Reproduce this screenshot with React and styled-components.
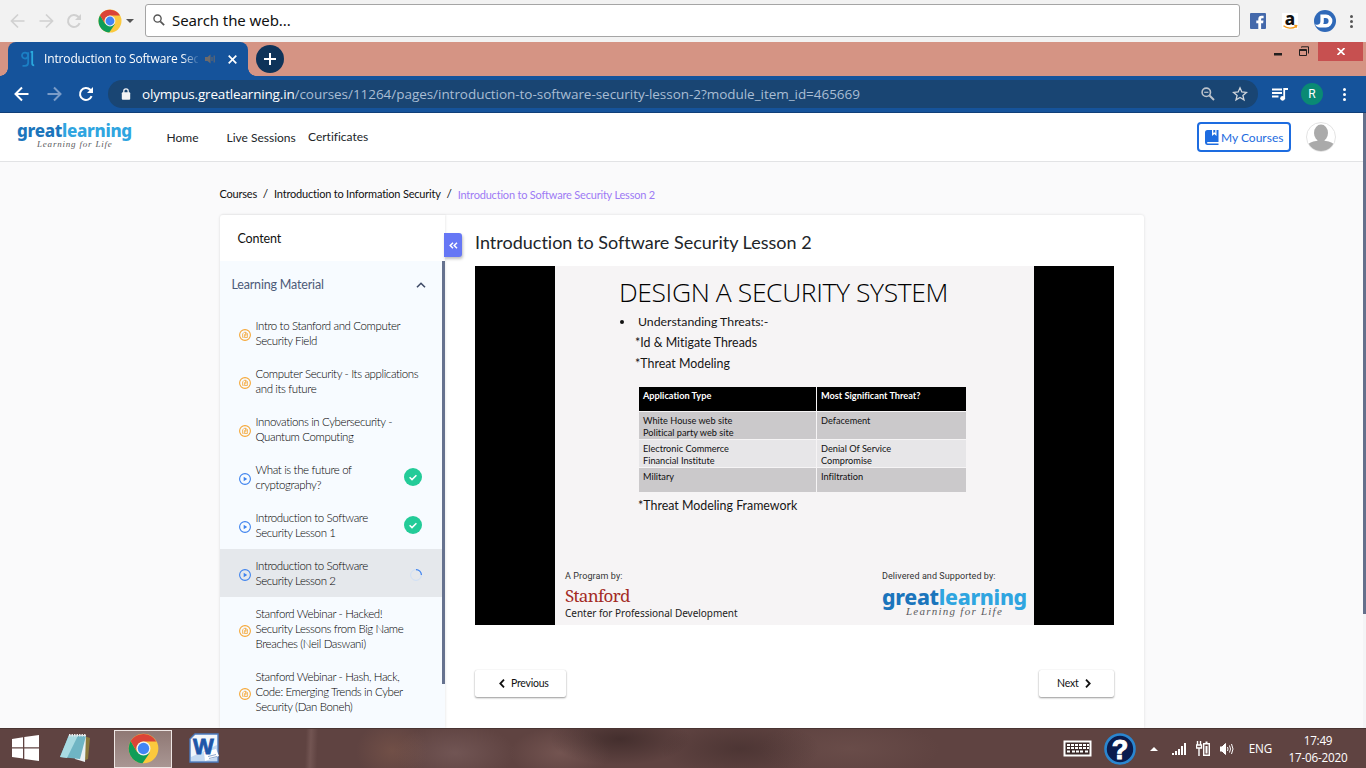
import React from "react";
import styled, { createGlobalStyle } from "styled-components";

const GlobalStyle = createGlobalStyle`
  * { box-sizing: border-box; }
  html, body { margin: 0; padding: 0; background: #fafbfc; }
  svg { display: block; flex: none; }
`;

const lato = `Lato, "Liberation Sans", sans-serif`;
const noto = `"Noto Sans", "Open Sans", sans-serif`;
const segoe = `"Open Sans", "Noto Sans", sans-serif`;

const Screen = styled.div`
  width: 1366px; height: 768px; display: flex; flex-direction: column;
  overflow: hidden; font-family: ${lato}; color: #212529; white-space: nowrap;
  font-variant-ligatures: none;
`;

/* Every run of text keeps a fixed advance through size and tracking. */
const Text = styled.span`
  display: block;
  white-space: pre;
  font-family: ${(p) => p.$font || lato};
  font-size: ${(p) => p.$size || 12}px;
  font-weight: ${(p) => p.$weight || 400};
  letter-spacing: ${(p) => p.$track || 0}px;
  line-height: ${(p) => p.$line || 16}px;
  color: ${(p) => p.$color || "inherit"};
`;

/* ---------- top search strip ---------- */
const SearchStrip = styled.div`
  height: 42px; flex: none; background: #f2f2f2; display: flex; align-items: center;
  padding: 0 9px 0 10px;
`;
const SearchNav = styled.div`
  display: flex; align-items: center; gap: 12px; width: 88px; color: #d2d2d2;
`;
const BrowserPick = styled.div`
  display: flex; align-items: center; gap: 4px; width: 47px;
`;
const Caret = styled.i`
  border: 4px solid transparent; border-top-color: #555; border-bottom: 0;
`;
const SearchBox = styled.div`
  width: 1095px; height: 33px; background: #fff; border: 1px solid #a5a5a5; border-radius: 3px;
  display: flex; align-items: center; gap: 7px; padding: 0 0 2px 7px; margin-top: -1px;
`;
const QuickLinks = styled.div`
  display: flex; align-items: center; margin-left: 10px;
`;
const AmazonTile = styled.div`margin-left: 16px;`;
const DTile = styled.div`margin-left: 16px;`;
const Dots = styled.div`
  display: flex; flex-direction: column; gap: ${(p) => p.$gap}px; margin-left: ${(p) => p.$left}px;
  i { width: 3px; height: 3px; border-radius: 50%; background: ${(p) => p.$color}; }
`;

/* ---------- browser tabs ---------- */
const TabStrip = styled.div`
  height: 34px; flex: none; background: #d59484; display: flex; align-items: flex-start;
`;
const TabCorner = styled.div`
  width: 8px; height: 34px;
  background: linear-gradient(#d59484, #d59484) 0 0 / 8px 26px no-repeat,
    radial-gradient(circle at ${(p) => (p.$right ? 8 : 0)}px 0, #d59484 7.5px, #15539b 8px) 0 26px / 8px 8px no-repeat;
`;
const Tab = styled.div`
  width: 240px; height: 34px; background: #15539b; border-radius: 8px 8px 0 0; color: #fff;
  display: flex; align-items: center; padding-left: 13px;
`;
const TabTitle = styled.div`
  width: 154px; margin-left: 9px; overflow: hidden;
  mask-image: linear-gradient(90deg, #000 138px, transparent 156px);
`;
const TabSound = styled.div`margin-left: 7px;`;
const TabClose = styled.div`margin-left: 13px;`;
const NewTab = styled.div`
  width: 28px; height: 28px; border-radius: 50%; background: #0e3359; margin: 3px 0 0;
  display: flex; align-items: center; justify-content: center;
`;
const WindowButtons = styled.div`
  margin-left: auto; display: flex; align-items: flex-start; padding-right: 3px;
`;
const CloseWindow = styled.div`
  width: 45px; height: 19px; background: #c75050; display: flex; align-items: center; justify-content: center;
  margin-left: 9px;
`;

/* ---------- address bar ---------- */
const AddressRow = styled.div`
  height: 37px; flex: none; background: #15539b; border-bottom: 1px solid #103f78; display: flex; align-items: center;
  padding-left: 14px; color: #fff;
`;
const NavIcons = styled.div`display: flex; align-items: center; gap: 16px; width: 94px;`;
const UrlPill = styled.div`
  width: 1150px; height: 28px; border-radius: 14px; background: #194573; display: flex; align-items: center;
  padding: 0 10px 0 13px;
`;
const Url = styled.div`
  display: flex; margin-left: 11px; flex: 1;
`;
const StarSlot = styled.div`margin-left: 17px;`;
const MediaSlot = styled.div`margin-left: 14px;`;
const Avatar = styled.div`
  width: 22px; height: 22px; border-radius: 50%; background: #0a8a74; display: flex; align-items: center;
  justify-content: center; margin-left: 13px;
`;

/* ---------- site ---------- */
const Site = styled.div`
  height: 615px; flex: none; display: flex; background: #fafafb;
`;
const SiteBody = styled.div`width: 1363px; flex: none;`;
const PageTrack = styled.div`
  width: 3px; background: #f4f4f6;
  &::before { content: ""; display: block; height: 501px; background: #64708c; }
`;
const Header = styled.header`
  height: 49px; background: #fff; border-bottom: 1px solid #e2e3e5; display: flex;
  align-items: center; padding: 0 27px 0 17px;
`;
const Brand = styled.div`width: 149.5px; margin-top: -5px;`;
const BrandWord = styled.div`display: flex; height: ${(p) => p.$h}px; align-items: center;`;
const BrandTag = styled.div`padding-left: ${(p) => p.$left}px;`;
const MenuItem = styled.a`width: ${(p) => p.$w}px; padding-top: ${(p) => p.$drop || 0}px;`;
const CoursesButton = styled.div`
  width: 94px; height: 30px; border: 2px solid #1d6ce0; border-radius: 4px; display: flex; align-items: center;
  gap: 2px; padding: 1px 0 0 6px; margin-left: auto;
`;
const UserPic = styled.div`margin-left: 15px;`;

const Crumbs = styled.nav`
  height: 53px; padding: 10px 0 0 219.5px; display: flex; align-items: center; color: #111;
`;
const CrumbSlash = styled.span`
  width: 17px; text-align: center; font: 12px/16px ${lato};
`;
const CurrentCrumb = styled.div`padding-top: 2px;`;
const Card = styled.div`
  width: 924px; height: 513px; margin-left: 220px; background: #fff; display: flex; border-radius: 3px 3px 0 0;
  box-shadow: 0 0 3px rgba(0, 0, 0, 0.12);
`;
const Sidebar = styled.aside`
  width: 225px; flex: none; display: flex; flex-direction: column;
  box-shadow: 1px 0 2px rgba(0, 0, 0, 0.07);
`;
const SidebarHead = styled.div`height: 46px; display: flex; align-items: center; padding: 1px 0 0 17.5px;`;
const SidebarScroll = styled.div`display: flex; height: 467px; overflow: hidden; background: #f7fbff;`;
const Lessons = styled.div`width: 222px;`;
const Thumb = styled.div`width: 3px; height: 423px; background: #66728f;`;
const Group = styled.div`
  height: 48px; display: flex; align-items: center; justify-content: space-between; padding: 0 16px 1px 11.5px;
`;
const Lesson = styled.div`
  display: flex; align-items: center; padding: 9px 20px 9px 19px;
  background: ${(p) => (p.$active ? "#e5e8ec" : "transparent")};
`;
const LessonIcon = styled.div`width: 16.5px; flex: none; padding-top: 4px;`;
const LessonText = styled.div`flex: 1; min-width: 0;`;
const DoneDot = styled.div`
  width: 18px; height: 18px; border-radius: 50%; background: #23cb98; display: flex; align-items: center;
  justify-content: center; flex: none;
`;
const Spinner = styled.div`padding-top: 4px;`;

const Main = styled.main`flex: 1; position: relative; padding: 16px 30px 0;`;
const Collapse = styled.div`
  position: absolute; left: -1px; top: 18px; width: 18px; height: 24px; background: #6677f5;
  border-radius: 0 3px 3px 0; box-shadow: 1px 2px 3px rgba(0, 0, 0, 0.25);
  display: flex; align-items: center; justify-content: center;
`;
const Player = styled.div`
  width: 639px; height: 359px; background: #000; margin-top: 13px; padding: 0 80px;
`;
const Slide = styled.div`
  width: 479px; height: 359px; background: #f6f4f5; color: #161616; padding: 9px 7px 0 9px;
`;
const SlideTitle = styled.div`height: 36px; padding: 0 0 2px 55px; display: flex; align-items: center;`;
const SlideLine = styled.div`
  height: 21px; padding-left: ${(p) => p.$indent}px; display: flex; align-items: center;
`;
const Bullet = styled.i`
  width: 4px; height: 4px; border-radius: 50%; background: #111; margin-right: 14px;
`;
const ThreatTable = styled.div`
  width: 327px; margin: 13px 0 3px 75px; display: grid; grid-template-columns: 177px 149px; column-gap: 1px;
  grid-template-rows: 24px 27px 27px 24px; row-gap: 1px;
`;
const Cell = styled.div`
  background: ${(p) => (p.$tone === "head" ? "#000" : p.$tone === "dark" ? "#cbc9cb" : "#e7e6e8")};
  padding: 3px 0 0 4px;
`;
const Credits = styled.div`display: flex; justify-content: space-between; margin-top: 54px; padding-left: 1px;`;
const Credit = styled.div`width: ${(p) => p.$w}px;`;

const Pager = styled.div`display: flex; justify-content: space-between; margin-top: 45px;`;
const PagerButton = styled.div`
  width: ${(p) => p.$w}px; height: 27px; background: #fff; border-radius: 2px;
  box-shadow: 0 1px 2px rgba(0, 0, 0, 0.4), 0 0 1px rgba(0, 0, 0, 0.15);
  display: flex; align-items: center; gap: 6px; padding: 0 0 1px ${(p) => p.$pad || 0}px;
`;

/* ---------- taskbar ---------- */
const Taskbar = styled.div`
  height: 40px; flex: none; display: flex; align-items: center; padding: 0 18px 0 11px; color: #fff;
  border-top: 1px solid #493432;
  background:
    linear-gradient(92deg, transparent 306px, rgba(150,118,114,.35) 311px, transparent 318px),
    radial-gradient(ellipse 36px 30px at 392px 22px, rgba(140,98,80,.4), transparent),
    radial-gradient(ellipse 60px 30px at 455px 24px, rgba(140,112,112,.4), transparent),
    radial-gradient(ellipse 70px 26px at 620px 10px, rgba(35,22,22,.45), transparent),
    radial-gradient(ellipse 50px 26px at 560px 24px, rgba(140,105,100,.45), transparent),
    radial-gradient(ellipse 80px 30px at 740px 20px, rgba(35,22,22,.3), transparent),
    radial-gradient(ellipse 90px 30px at 850px 20px, rgba(120,90,85,.4), transparent),
    #5f4341;
`;
const TaskSlot = styled.div`
  width: ${(p) => p.$w}px; display: flex; align-items: center; justify-content: center; margin-top: -2px;
`;
const ActiveTask = styled.div`
  width: 58px; height: 38px; border: 1px solid #eee6e4; background: linear-gradient(#8f7874, #a99693);
  display: flex; align-items: center; justify-content: center; margin: 0 17px 0 4px;
`;
const Tray = styled.div`margin-left: auto; display: flex; align-items: center;`;
const TrayIcon = styled.div`margin-right: ${(p) => p.$gap}px; margin-top: ${(p) => p.$top || 0}px;`;
const Clock = styled.div`width: 60px; display: flex; flex-direction: column; align-items: center;`;

/* ---------- icons ---------- */
const ChromeLogo = ({ size }) => (
  <svg width={size} height={size} viewBox="0 0 48 48">
    <circle cx="24" cy="24" r="23" fill="#fbc93d" />
    <path d="M4.1 12.5A23 23 0 0 0 22.5 47L34 30 24 34 14 29.5Z" fill="#0f9d58" />
    <path d="M4.1 12.5A23 23 0 0 1 43.9 13.2H24A11.5 11.5 0 0 0 13.5 28.5Z" fill="#db4437" />
    <circle cx="24" cy="24" r="10.8" fill="#f2f2f2" />
    <circle cx="24" cy="24" r="8.8" fill="#4285f4" />
  </svg>
);
const Arrow = ({ flip, color, size = 16, w = 2 }) => (
  <svg width={size} height={size} viewBox="0 0 16 16" fill="none" stroke={color} strokeWidth={w}>
    <path d={flip ? "M1.5 8H14M8 1.5 14.5 8 8 14.5" : "M14.5 8H2M8 1.5 1.5 8 8 14.5"} />
  </svg>
);
const Reload = ({ color }) => (
  <svg width="16" height="16" viewBox="0 0 16 16">
    <path d="M13.6 10.2A6 6 0 1 1 12.3 3.8L14 5.5" fill="none" stroke={color} strokeWidth="2" />
    <path d="M15 1V7H9Z" fill={color} />
  </svg>
);
const Magnifier = ({ color, minus, size = 14 }) => (
  <svg width={size} height={size} viewBox="0 0 14 14" fill="none" stroke={color} strokeWidth="1.6">
    <circle cx="5.3" cy="5.3" r="4.2" />
    <path d="M8.5 8.5 13 13" strokeWidth="2" />
    {minus && <path d="M3.2 5.3H7.4" strokeWidth="1.2" />}
  </svg>
);
const FileIcon = () => (
  <svg width="12" height="12" viewBox="0 0 12 12" fill="none" stroke="#f5a737" strokeWidth="1.1">
    <circle cx="6" cy="6" r="5.4" />
    <path d="M4.6 8.4H3.6V4.9L5.2 3.3H7L8.4 4.7V8.5H5.4V5.6H6.8V7.4M6.6 3.3V5H8.4" strokeWidth=".8" />
  </svg>
);
const PlayIcon = () => (
  <svg width="12" height="12" viewBox="0 0 12 12">
    <circle cx="6" cy="6" r="5.4" fill="none" stroke="#3d82ee" strokeWidth="1.1" />
    <path d="M4.7 3.8 8.2 6 4.7 8.2Z" fill="#3d82ee" />
  </svg>
);
const Chevron = ({ left }) => (
  <svg width="6" height="9" viewBox="0 0 6 9" fill="none" stroke="#111" strokeWidth="1.8">
    <path d={left ? "M5 .7 1.3 4.5 5 8.3" : "M1 .7 4.7 4.5 1 8.3"} />
  </svg>
);

const GreatLearning = ({ size, h, track, tagSize, tagTrack, tagLeft, tagLine }) => (
  <>
    <BrandWord $h={h}>
      <Text $font={noto} $weight={800} $size={size} $track={track} $line={h} $color="#1b75bc">great</Text>
      <Text $font={noto} $weight={800} $size={size} $track={track} $line={h} $color="#2fa5e0">learning</Text>
    </BrandWord>
    <BrandTag $left={tagLeft}>
      <Text as="em" $font={`"Liberation Serif", serif`} $size={tagSize} $track={tagTrack} $line={tagLine} $color="#5a5b5e">
        Learning for Life
      </Text>
    </BrandTag>
  </>
);

const lessons = [
  { lines: ["Intro to Stanford and Computer", "Security Field"] },
  { lines: ["Computer Security - Its applications", "and its future"] },
  { lines: ["Innovations in Cybersecurity -", "Quantum Computing"] },
  { lines: ["What is the future of", "cryptography?"], video: true, done: true },
  { lines: ["Introduction to Software", "Security Lesson 1"], video: true, done: true },
  { lines: ["Introduction to Software", "Security Lesson 2"], video: true, active: true },
  { lines: ["Stanford Webinar - Hacked!", "Security Lessons from Big Name", "Breaches (Neil Daswani)"] },
  { lines: ["Stanford Webinar - Hash, Hack,", "Code: Emerging Trends in Cyber", "Security (Dan Boneh)"] },
];

const threats = [
  { tone: "head", cells: [["Application Type"], ["Most Significant Threat?"]] },
  { tone: "dark", cells: [["White House web site", "Political party web site"], ["Defacement"]] },
  { tone: "light", cells: [["Electronic Commerce", "Financial Institute"], ["Denial Of Service", "Compromise"]] },
  { tone: "dark", cells: [["Military"], ["Infiltration"]] },
];

export default function App() {
  return (
    <Screen>
      <GlobalStyle />
      <SearchStrip>
        <SearchNav>
          <Arrow color="#d0d0d0" w={1.7} />
          <Arrow flip color="#d0d0d0" w={1.7} />
          <Reload color="#d0d0d0" />
        </SearchNav>
        <BrowserPick><ChromeLogo size={24} /><Caret /></BrowserPick>
        <SearchBox>
          <Magnifier color="#555" size={12} />
          <Text $font={noto} $size={15} $track={-0.08} $line={20} $color="#111">Search the web...</Text>
        </SearchBox>
        <QuickLinks>
          <svg width="16" height="16" viewBox="0 0 16 16">
            <rect width="16" height="16" rx="1" fill="#4469ab" />
            <path d="M8.3 16V10.2H6.3V7.6H8.3V6C8.3 3.9 9.5 2.7 11.5 2.7H13.6V5.2H12.2C11.4 5.2 11.1 5.6 11.1 6.3V7.6H13.5L13.1 10.2H11.1V16Z" fill="#fff" />
          </svg>
          <AmazonTile>
            <svg width="16" height="16" viewBox="0 0 16 16">
              <rect width="16" height="16" fill="#fff" />
              <text x="8" y="11.7" textAnchor="middle" fontFamily="Noto Sans" fontWeight="800" fontSize="17" fill="#111">a</text>
              <path d="M1.5 12.8C5 15.8 10.5 15.8 14 13.6M12.3 12.4 14.7 12.6 14 14.8" fill="none" stroke="#f59b1b" strokeWidth="1.3" />
            </svg>
          </AmazonTile>
          <DTile>
            <svg width="22" height="22" viewBox="0 0 22 22">
              <circle cx="11" cy="11" r="11" fill="#2f69b8" />
              <path d="M6.4 4.6H12A6.4 6.4 0 0 1 12 17.4H6C3.6 17.4 1.8 16.2 .8 14.2 3 15.4 6.4 15 6.4 11.5Z" fill="#fff" />
              <path d="M9.8 8H11.6A3 3 0 0 1 11.6 14H9.2Q9.8 13 9.8 11.8Z" fill="#2f69b8" />
            </svg>
          </DTile>
          <Dots $gap={2} $left={14} $color="#555"><i /><i /><i /></Dots>
        </QuickLinks>
      </SearchStrip>

      <TabStrip>
        <TabCorner />
        <Tab>
          <svg width="14" height="16" viewBox="0 0 14 16" fill="none" strokeWidth="1.8">
            <circle cx="4" cy="4.6" r="3" stroke="#1b7fc4" />
            <path d="M7.2 1.2V11.5Q7.2 14.8 4 14.8H1.5" stroke="#1b7fc4" />
            <path d="M9.6 1H11.2V12.5Q11.2 14.3 13.2 14.3" stroke="#2aa8dd" />
          </svg>
          <TabTitle><Text $font={segoe} $size={12} $track={-0.14}>Introduction to Software Secu</Text></TabTitle>
          <TabSound>
            <svg width="10" height="10" viewBox="0 0 10 10">
              <path d="M0 3H2.5L5.5 .5V9.5L2.5 7H0Z" fill="#6d6a6a" />
              <path d="M7 3V7M9.2 1.5V8.5" stroke="#6d6a6a" />
            </svg>
          </TabSound>
          <TabClose>
            <svg width="9" height="9" viewBox="0 0 9 9" stroke="#fff" strokeWidth="1.7">
              <path d="M.7 .7 8.3 8.3M8.3 .7 .7 8.3" />
            </svg>
          </TabClose>
        </Tab>
        <TabCorner $right />
        <NewTab>
          <svg width="12" height="12" viewBox="0 0 12 12" stroke="#fff" strokeWidth="2"><path d="M6 0V12M0 6H12" /></svg>
        </NewTab>
        <WindowButtons>
          <svg width="35" height="19" viewBox="0 0 35 19">
            <rect x="0" y="11" width="8" height="2.5" fill="#231f1f" />
            <path d="M25.5 7.5H32.5V13.5H25.5ZM25.5 8.5H32.5M27.5 5.5V4.8H34.5V11.5" fill="none" stroke="#231f1f" />
          </svg>
          <CloseWindow>
            <svg width="8" height="7" viewBox="0 0 8 7" stroke="#fff" strokeWidth="1.7"><path d="M.5 0 7.5 7M7.5 0 .5 7" /></svg>
          </CloseWindow>
        </WindowButtons>
      </TabStrip>

      <AddressRow>
        <NavIcons>
          <Arrow color="#fff" /><Arrow flip color="#7a9cc8" /><Reload color="#fff" />
        </NavIcons>
        <UrlPill>
          <svg width="10" height="12" viewBox="0 0 10 12">
            <rect x=".8" y="4.3" width="8.4" height="7.4" rx="1" fill="#f0f2f5" />
            <path d="M2.8 5V3A2.2 2.2 0 0 1 7.2 3V5" fill="none" stroke="#f0f2f5" strokeWidth="1.3" />
          </svg>
          <Url>
            <Text $font={segoe} $size={13.5} $track={-0.17} $line={20} $color="#fff">olympus.greatlearning.in</Text>
            <Text $font={segoe} $size={13.5} $track={-0.04} $line={20} $color="#a9bdd4">/courses/11264/pages/introduction-to-software-security-lesson-2?module_item_id=465669</Text>
          </Url>
          <Magnifier color="#bcc3cc" minus />
          <StarSlot>
            <svg width="16" height="16" viewBox="0 0 16 16">
              <path d="M8 1.8 9.8 6 14.4 6.4 10.9 9.4 12 13.9 8 11.5 4 13.9 5.1 9.4 1.6 6.4 6.2 6Z" fill="none" stroke="#d1d6dc" strokeWidth="1.3" />
            </svg>
          </StarSlot>
        </UrlPill>
        <MediaSlot>
          <svg width="16" height="13" viewBox="0 0 16 13">
            <path d="M0 1.5H10M0 5H10M0 8.5H6.5M12.2 10.5V1H16" fill="none" stroke="#fff" strokeWidth="1.8" />
            <circle cx="10.6" cy="10.3" r="2.4" fill="#fff" />
          </svg>
        </MediaSlot>
        <Avatar><Text $font="Roboto" $size={12} $color="#fff">R</Text></Avatar>
        <Dots $gap={2} $left={20} $color="#fff"><i /><i /><i /></Dots>
      </AddressRow>

      <Site>
        <SiteBody>
          <Header>
            <Brand><GreatLearning size={17} h={19} track={-0.3} tagSize={9} tagTrack={0.8} tagLeft={20} tagLine={8} /></Brand>
            <MenuItem $w={60} $drop={2}><Text $size={12}>Home</Text></MenuItem>
            <MenuItem $w={81.5} $drop={2}><Text $size={12}>Live Sessions</Text></MenuItem>
            <MenuItem $w={70}><Text $size={12}>Certificates</Text></MenuItem>
            <CoursesButton>
              <svg width="14" height="15" viewBox="0 0 14 15">
                <path d="M2.5 0H13.5V12H2.5A1 1 0 0 0 2.5 13.5H13.5V15H2.5A2.4 2.4 0 0 1 0 12.6V2.5A2.5 2.5 0 0 1 2.5 0Z" fill="#1d6ce0" />
                <path d="M7 0H11.5V6L9.3 4 7 6Z" fill="#fff" /><path d="M8.3 0H10.3V3L9.3 2.2 8.3 3Z" fill="#1d6ce0" />
              </svg>
              <Text $font={lato} $size={12} $color="#1d6ce0">My Courses</Text>
            </CoursesButton>
            <UserPic>
              <svg width="30" height="30" viewBox="0 0 30 30">
                <defs><clipPath id="face"><circle cx="15" cy="15" r="14" /></clipPath></defs>
                <circle cx="15" cy="15" r="14.5" fill="#fff" stroke="#e3e3e3" />
                <g clipPath="url(#face)" fill="#aaa"><ellipse cx="15" cy="11" rx="7" ry="8.4" /><path d="M11.5 17H18.5V18.7Q28 20 29 24V30H1V24Q2 20 11.5 18.7Z" /></g>
              </svg>
            </UserPic>
          </Header>

          <Crumbs>
            <Text $size={11} $track={-0.2}>Courses</Text><CrumbSlash>/</CrumbSlash>
            <Text $size={11} $track={-0.2}>Introduction to Information Security</Text><CrumbSlash>/</CrumbSlash>
            <CurrentCrumb>
              <Text $size={11} $track={-0.2} $color="#9d7bf5">Introduction to Software Security Lesson 2</Text>
            </CurrentCrumb>
          </Crumbs>

          <Card>
            <Sidebar>
              <SidebarHead><Text $size={12.5} $track={-0.15} $color="#111">Content</Text></SidebarHead>
              <SidebarScroll>
                <Lessons>
                  <Group>
                    <Text $size={12.5} $track={-0.18} $color="#4c5a78">Learning Material</Text>
                    <svg width="10" height="6" viewBox="0 0 10 6" fill="none" stroke="#3e4a66" strokeWidth="1.6"><path d="M1 5.3 5 1.3 9 5.3" /></svg>
                  </Group>
                  {lessons.map((l, i) => (
                    <Lesson key={i} $active={l.active}>
                      <LessonIcon>{l.video ? <PlayIcon /> : <FileIcon />}</LessonIcon>
                      <LessonText>
                        {l.lines.map((t) => <Text key={t} $size={11.5} $weight={300} $track={-0.38} $line={15} $color="#000">{t}</Text>)}
                      </LessonText>
                      {l.done && (
                        <DoneDot>
                          <svg width="8" height="7" viewBox="0 0 8 7" fill="none" stroke="#fff" strokeWidth="1.5"><path d="M.6 3.3 3 5.6 7.4 1.2" /></svg>
                        </DoneDot>
                      )}
                      {l.active && (
                        <Spinner>
                          <svg width="12" height="12" viewBox="0 0 12 12" fill="none">
                            <circle cx="6" cy="6" r="5.4" stroke="#cfdff5" /><path d="M6 .6A5.4 5.4 0 0 1 11.4 6" stroke="#3d82ee" strokeWidth="1.2" />
                          </svg>
                        </Spinner>
                      )}
                    </Lesson>
                  ))}
                </Lessons>
                <Thumb />
              </SidebarScroll>
            </Sidebar>

            <Main>
              <Collapse>
                <svg width="9" height="7" viewBox="0 0 9 7" fill="none" stroke="#fff" strokeWidth="1.5"><path d="M4 .7 1.2 3.5 4 6.3M8 .7 5.2 3.5 8 6.3" /></svg>
              </Collapse>
              <Text $size={18} $line={22} $color="#212529">Introduction to Software Security Lesson 2</Text>
              <Player>
                <Slide>
                  <SlideTitle><Text $font={segoe} $weight={300} $size={26.5} $track={-0.4} $line={34} $color="#000">DESIGN A SECURITY SYSTEM</Text></SlideTitle>
                  <SlideLine $indent={56}><Bullet /><Text $size={12.3}>Understanding Threats:-</Text></SlideLine>
                  <SlideLine $indent={71}><Text $size={12.4}>*Id &amp; Mitigate Threads</Text></SlideLine>
                  <SlideLine $indent={71}><Text $size={12.4}>*Threat Modeling</Text></SlideLine>
                  <ThreatTable>
                    {threats.map((row) => row.cells.map((lines) => (
                      <Cell key={lines[0]} $tone={row.tone}>
                        {lines.map((t) => (
                          <Text key={t} $size={9.2} $line={12} $weight={row.tone === "head" ? 700 : 400} $color={row.tone === "head" ? "#fff" : "#111"}>{t}</Text>
                        ))}
                      </Cell>
                    )))}
                  </ThreatTable>
                  <SlideLine $indent={74}><Text $size={12.4}>*Threat Modeling Framework</Text></SlideLine>
                  <Credits>
                    <Credit $w={180}>
                      <Text $font="Roboto" $size={9} $track={0.1} $line={12} $color="#333">A Program by:</Text>
                      <Text $font={`"Noto Serif", "Liberation Serif", serif`} $size={17} $track={-0.7} $line={28} $color="#a32a24">Stanford</Text>
                      <Text $font={noto} $size={10} $track={-0.03} $line={7} $color="#222">Center for Professional Development</Text>
                    </Credit>
                    <Credit $w={145}>
                      <Text $font="Roboto" $size={9} $track={0.07} $line={12} $color="#333">Delivered and Supported by:</Text>
                      <GreatLearning size={21.3} h={29} track={-0.3} tagSize={11} tagTrack={1.25} tagLeft={24} tagLine={1} />
                    </Credit>
                  </Credits>
                </Slide>
              </Player>
              <Pager>
                <PagerButton $w={91} $pad={24}><Chevron left /><Text $size={10.5} $track={-0.25} $color="#111">Previous</Text></PagerButton>
                <PagerButton $w={75} $pad={18}><Text $size={10.5} $track={-0.2} $color="#111">Next</Text><Chevron /></PagerButton>
              </Pager>
            </Main>
          </Card>
        </SiteBody>
        <PageTrack />
      </Site>

      <Taskbar>
        <TaskSlot $w={28}>
          <svg width="27" height="26" viewBox="0 0 27 26" fill="#fff"><path d="M0 4 11 2.3V12.3H0ZM12.3 2 27 0V12.3H12.3ZM0 13.6H11V23.6L0 22ZM12.3 13.6H27V26L12.3 24Z" /></svg>
        </TaskSlot>
        <TaskSlot $w={71}>
          <svg width="32" height="30" viewBox="0 0 32 30">
            <path d="M25 3 31 5 29 26 24 28Z" fill="#8b7a3c" />
            <path d="M10 2H27L26 29 16 26Z" fill="#e9f1f3" />
            <path d="M10 2 27 3 21 26 1 24Z" fill="#6fb5c4" /><path d="M10 2 19 2.5 8 25 1 24Z" fill="#a9dbe2" />
            <path d="M10 2.2H27" stroke="#e8e8e8" strokeWidth="2.5" strokeDasharray="1.5 1" />
          </svg>
        </TaskSlot>
        <ActiveTask><ChromeLogo size={31} /></ActiveTask>
        <TaskSlot $w={30}>
          <svg width="30" height="30" viewBox="0 0 30 30">
            <path d="M6 1H29V29H1V6Z" fill="#f2f7fc" stroke="#4c7cc0" strokeWidth="1.4" />
            <path d="M2 24 28 12V28H2Z" fill="#c5daf2" />
            <path d="M15 19 27 16 30 23 16 28Z" fill="#fff" /><path d="M19 23.5 27 21.5M20 25.5 28 23.5" stroke="#8ea9cf" />
            <text x="14.5" y="21" textAnchor="middle" fontFamily="Liberation Sans" fontWeight="700" fontSize="22" fill="#1e56a8" stroke="#1e56a8" strokeWidth=".8">W</text>
          </svg>
        </TaskSlot>
        <Tray>
          <TrayIcon $gap={12}>
            <svg width="29" height="17" viewBox="0 0 29 17">
              <rect x=".5" y=".5" width="28" height="16" fill="#fff" />
              <rect x="2.5" y="2.5" width="24" height="12" fill="#3b2a29" />
              <path d="M4 5H26M4 8H26M4 11.5H7M9 11.5H20M22 11.5H25" stroke="#fff" strokeWidth="2" strokeDasharray="3 1" />
            </svg>
          </TrayIcon>
          <TrayIcon $gap={14}>
            <svg width="32" height="32" viewBox="0 0 32 32">
              <circle cx="16" cy="16" r="14.5" fill="#0a1c4e" stroke="#2a86d0" strokeWidth="2.6" />
              <text x="16" y="25.5" textAnchor="middle" fontFamily="Liberation Sans" fontWeight="700" fontSize="27" fill="#fff" stroke="#fff">?</text>
            </svg>
          </TrayIcon>
          <TrayIcon $gap={14}><svg width="8" height="4" viewBox="0 0 8 4"><path d="M0 4 4 0 8 4Z" fill="#fff" /></svg></TrayIcon>
          <TrayIcon $gap={9}>
            <svg width="15" height="12" viewBox="0 0 15 12"><path d="M0 10H2V12H0ZM3 8H5V12H3ZM6 6H8V12H6ZM9 3H11V12H9ZM12 0H14V12H12Z" fill="#fff" /></svg>
          </TrayIcon>
          <TrayIcon $gap={9}>
            <svg width="15" height="15" viewBox="0 0 15 15" fill="none" stroke="#fff" strokeWidth="1.4">
              <path d="M1.5 0V4M4.5 0V4M.5 4H5.5V7H.5ZM3 7V15" /><path d="M7.7 2.7H13.3V14.3H7.7ZM9.5 1.3H11.5" /><path d="M9.5 5V12.5H11.5V5Z" fill="#fff" stroke="none" />
            </svg>
          </TrayIcon>
          <TrayIcon $gap={15}>
            <svg width="14" height="12" viewBox="0 0 14 12" fill="none" stroke="#fff"><path d="M0 4H2L5.5 .5V11.5L2 8H0Z" fill="#fff" /><path d="M7.5 4Q8.5 6 7.5 8M9.5 2.5Q11.5 6 9.5 9.5M11.5 1Q14.5 6 11.5 11" /></svg>
          </TrayIcon>
          <TrayIcon $gap={16} $top={-2}><Text $font={segoe} $size={11.7} $track={-0.2}>ENG</Text></TrayIcon>
          <Clock><Text $font={segoe} $size={11.7} $track={-0.3} $line={17}>17:49</Text><Text $font={segoe} $size={11.7} $track={-0.2} $line={17}>17-06-2020</Text></Clock>
        </Tray>
      </Taskbar>
    </Screen>
  );
}
